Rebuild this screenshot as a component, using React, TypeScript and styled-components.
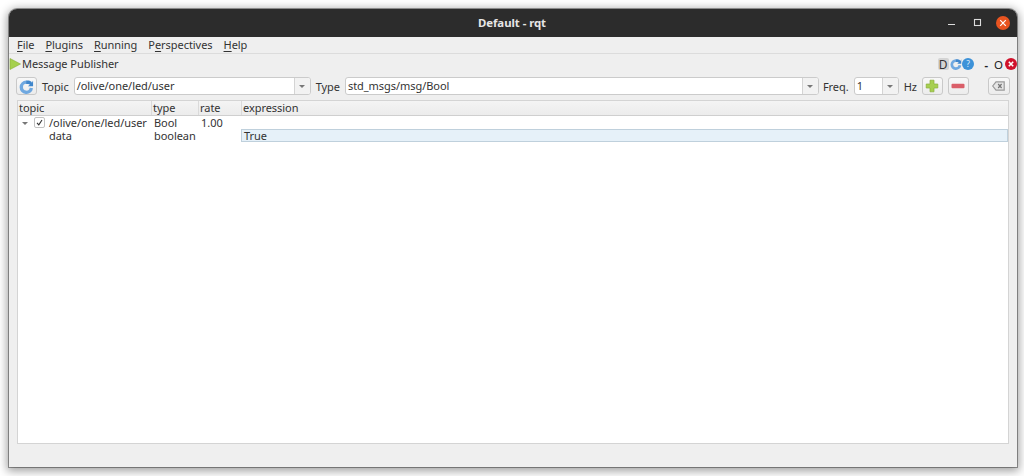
import React from "react";
import styled, { createGlobalStyle } from "styled-components";

const Global = createGlobalStyle`
  html, body { margin: 0; padding: 0; background: #fff; }
  #root { width: 1024px; height: 476px; overflow: hidden; }
`;
const FONT = `"Noto Sans", "Open Sans", "Liberation Sans", sans-serif`;

const Page = styled.div`
  width: 1024px; height: 476px; box-sizing: border-box; padding: 9px 7px 9px 9px;
  background: #fff; font-family: ${FONT}; font-size: 11px; color: #3c3c3c; letter-spacing: -0.05px;
`;
const Window = styled.div`
  width: 1008px; height: 458px; display: flex; flex-direction: column;
  border-radius: 8px 8px 0 0; overflow: hidden; background: #efefef;
  box-shadow: 0 2px 10px 2px rgba(0,0,0,.38), 0 0 0 1px rgba(0,0,0,.35);
`;
const TitleBar = styled.div`
  height: 28px; flex: none; background: #2c2c2c; display: grid; grid-template-columns: 1fr auto 1fr; align-items: center;
`;
const Title = styled.div`
  color: #e6e6e6; font-weight: 700; font-size: 11.4px; grid-column: 2; padding: 0 2px 1px 0;
`;
const WinButtons = styled.div`
  grid-column: 3; justify-self: end; display: flex; align-items: center; gap: 11px; padding-right: 7px;
`;
const WinIcon = styled.svg`
  width: 14px; height: 14px; display: block;
`;
const CloseDot = styled.div`
  width: 14px; height: 14px; border-radius: 50%; background: #e95420; display: flex; align-items: center; justify-content: center;
`;
const MenuBar = styled.div`
  height: 16px; flex: none; display: flex; gap: 11px; padding: 0 0 0 8px; align-items: center;
  border-bottom: 1px solid #dcdcdc; color: #333;
`;
const MenuItem = styled.span`
  line-height: 16px;
  u { text-decoration-thickness: 1px; text-underline-offset: 2px; }
`;
const DockHeader = styled.div`
  height: 16px; margin-top: 2px; flex: none; display: flex; align-items: center;
`;
const DockTitle = styled.span`
  margin-left: 1px; color: #333; line-height: 16px;
`;
const Spacer = styled.div`
  flex: 1;
`;
const DockTools = styled.div`
  display: flex; align-items: center;
`;
const DBadge = styled.span`
  width: 11px; height: 12px; margin-right: 1px; background: #d4d4d4; border-radius: 2px; display: flex; align-items: center; justify-content: center; color: #333; font-size: 12px;
`;
const DockDash = styled.span`
  margin-left: 11px; font-size: 11px; color: #222; font-weight: 700;
`;
const DockO = styled.span`
  margin: 0 2px 0 6px; font-size: 11.5px; color: #222;
`;
const Toolbar = styled.div`
  height: 20px; margin-top: 4px; flex: none; display: flex; align-items: center; padding: 0 7px 0 7px;
`;
const ToolBtn = styled.button<{ $w?: number; $ml?: number }>`
  width: ${p => p.$w ?? 21}px; height: 18px; margin: 0 0 0 ${p => p.$ml ?? 0}px; padding: 0; flex: none;
  border: 1px solid #c9c9c9; border-radius: 3px; background: linear-gradient(#f8f8f8, #ececec);
  display: flex; align-items: center; justify-content: center;
`;
const Label = styled.span<{ $ml: number; $mr: number }>`
  margin: 0 ${p => p.$mr}px 0 ${p => p.$ml}px; color: #333; flex: none;
`;
const Combo = styled.div<{ $w: number }>`
  width: ${p => p.$w}px; height: 18px; box-sizing: border-box; flex: none; display: flex;
  border: 1px solid #cbcbcb; border-radius: 3px; background: #fff; overflow: hidden;
`;
const ComboText = styled.span`
  flex: 1; padding-left: 2px; line-height: 16px; color: #333;
`;
const ComboArrow = styled.span`
  width: 15px; flex: none; border-left: 1px solid #d4d4d4; background: #f2f2f2; display: flex; align-items: center; justify-content: center;
  &::after { content: ""; border: 3px solid transparent; border-top: 3px solid #777; border-bottom: 0; }
`;
const Tree = styled.div`
  margin: 4px 8px 0 8px; height: 344px; flex: none; box-sizing: border-box; background: #fff; border: 1px solid #d4d4d4;
  display: flex; flex-direction: column;
`;
const columns = "134px 47px 43px 1fr";
const HeaderRow = styled.div`
  display: grid; grid-template-columns: ${columns}; height: 15px; flex: none; box-sizing: border-box;
  background: linear-gradient(#f4f4f4, #ececec); border-bottom: 1px solid #cfcfcf;
`;
const HeaderCell = styled.div`
  padding-left: 1px; line-height: 14px; border-right: 1px solid #dadada; color: #333;
  &:last-child { border-right: 0; }
`;
const Row = styled.div`
  display: grid; grid-template-columns: ${columns}; height: 13px; flex: none;
`;
const Cell = styled.div<{ $pl?: number }>`
  padding-left: ${p => p.$pl ?? 2}px; line-height: 13px; color: #333; white-space: nowrap; display: flex; align-items: center;
`;
const Expander = styled.span`
  width: 0; height: 0; border: 3px solid transparent; border-top: 3px solid #777; border-bottom: 0; margin-right: 6px; margin-top: 1px;
`;
const Check = styled.span`
  width: 9px; height: 9px; border: 1px solid #c2c2c2; border-radius: 2px; background: #fff; margin-right: 4px; display: flex; align-items: center; justify-content: center;
`;
const Editor = styled.div`
  height: 13px; box-sizing: border-box; background: #e6f1f9; border: 1px solid #bfd0dc; padding-left: 2px; line-height: 11px; color: #333; margin-left: -1px;
`;
const StatusBar = styled.div`
  flex: 1;
`;

const Refresh = ({ size = 15 }: { size?: number }) => (
  <svg width={size} height={size} viewBox="0 0 16 16">
    <path d="M13.2 9.6A5.4 5.4 0 1 1 7.8 3.4" fill="none" stroke="#6fa8e0" strokeWidth="3.6" />
    <path d="M7.6 1.6h2.6c1.6 0 3 1 3.6 2.4L15 1.6v6.2H9.4l2.2-1.6C11.2 5.6 10.6 5.2 9.8 5.2H7.6z" fill="#3f86cc" />
  </svg>
);

export default function App() {
  return (
    <Page>
      <Global />
      <Window>
        <TitleBar>
          <Title>Default - rqt</Title>
          <WinButtons>
            <WinIcon viewBox="0 0 14 14"><path d="M2 8.5h7" stroke="#ddd" strokeWidth="1.1" /></WinIcon>
            <WinIcon viewBox="0 0 14 14"><rect x="3.5" y="3.5" width="6" height="6" fill="none" stroke="#ddd" strokeWidth="1.1" /></WinIcon>
            <CloseDot>
              <svg width="8" height="8" viewBox="0 0 8 8"><path d="M1.2 1.2l5.6 5.6M6.8 1.2L1.2 6.8" stroke="#fff" strokeWidth="1.2" /></svg>
            </CloseDot>
          </WinButtons>
        </TitleBar>
        <MenuBar>
          <MenuItem><u>F</u>ile</MenuItem>
          <MenuItem><u>P</u>lugins</MenuItem>
          <MenuItem><u>R</u>unning</MenuItem>
          <MenuItem>P<u>e</u>rspectives</MenuItem>
          <MenuItem><u>H</u>elp</MenuItem>
        </MenuBar>
        <DockHeader>
          <svg width="12" height="12" viewBox="0 0 12 12"><path d="M1 .5L11.5 6 1 11.5z" fill="#a5d04c" stroke="#86ad35" strokeWidth=".6" /></svg>
          <DockTitle>Message Publisher</DockTitle>
          <Spacer />
          <DockTools>
            <DBadge>D</DBadge>
            <Refresh size={12} />
            <svg width="12" height="12" viewBox="0 0 12 12"><circle cx="6" cy="6" r="6" fill="#3d92d8" /><text x="6" y="9" textAnchor="middle" fontSize="8.5" fill="#dcecf8" fontFamily="Noto Sans">?</text></svg>
            <DockDash>-</DockDash>
            <DockO>O</DockO>
            <svg width="12" height="12" viewBox="0 0 12 12"><circle cx="6" cy="6" r="6" fill="#d0112b" /><path d="M3.8 3.8l4.4 4.4M8.2 3.8L3.8 8.2" stroke="#fff" strokeWidth="1.6" /></svg>
          </DockTools>
        </DockHeader>
        <Toolbar>
          <ToolBtn><Refresh /></ToolBtn>
          <Label $ml={5} $mr={5}>Topic</Label>
          <Combo $w={237}><ComboText>/olive/one/led/user</ComboText><ComboArrow /></Combo>
          <Label $ml={5} $mr={5}>Type</Label>
          <Combo $w={474}><ComboText>std_msgs/msg/Bool</ComboText><ComboArrow /></Combo>
          <Label $ml={4} $mr={5}>Freq.</Label>
          <Combo $w={45}><ComboText>1</ComboText><ComboArrow /></Combo>
          <Label $ml={5} $mr={5}>Hz</Label>
          <ToolBtn>
            <svg width="14" height="14" viewBox="0 0 14 14"><path d="M5 1.2h4v3.8h3.8v4H9v3.8H5V9H1.2V5H5z" fill="#a7cf50" stroke="#8aaf3a" strokeWidth=".7" /></svg>
          </ToolBtn>
          <ToolBtn $ml={5}>
            <svg width="14" height="6" viewBox="0 0 14 6"><rect x=".5" y=".8" width="13" height="4.4" rx="1" fill="#da5f69" /></svg>
          </ToolBtn>
          <ToolBtn $ml={19} $w={22}>
            <svg width="13" height="10" viewBox="0 0 13 10"><path d="M4 .8h8.2v8.4H4L.7 5z" fill="#e6e6e6" stroke="#9a9a9a" strokeWidth="1.2" /><path d="M6.2 3l3.4 4M9.6 3L6.2 7" stroke="#777" strokeWidth="1.2" /></svg>
          </ToolBtn>
        </Toolbar>
        <Tree>
          <HeaderRow>
            <HeaderCell>topic</HeaderCell>
            <HeaderCell>type</HeaderCell>
            <HeaderCell>rate</HeaderCell>
            <HeaderCell>expression</HeaderCell>
          </HeaderRow>
          <Row>
            <Cell $pl={4}>
              <Expander />
              <Check>
                <svg width="7" height="7" viewBox="0 0 7 7"><path d="M1 3.8l1.8 2L6 1" fill="none" stroke="#333" strokeWidth="1.1" /></svg>
              </Check>
              /olive/one/led/user
            </Cell>
            <Cell>Bool</Cell>
            <Cell>1.00</Cell>
            <Cell />
          </Row>
          <Row>
            <Cell $pl={31}>data</Cell>
            <Cell>boolean</Cell>
            <Cell />
            <Editor>True</Editor>
          </Row>
        </Tree>
        <StatusBar />
      </Window>
    </Page>
  );
}
